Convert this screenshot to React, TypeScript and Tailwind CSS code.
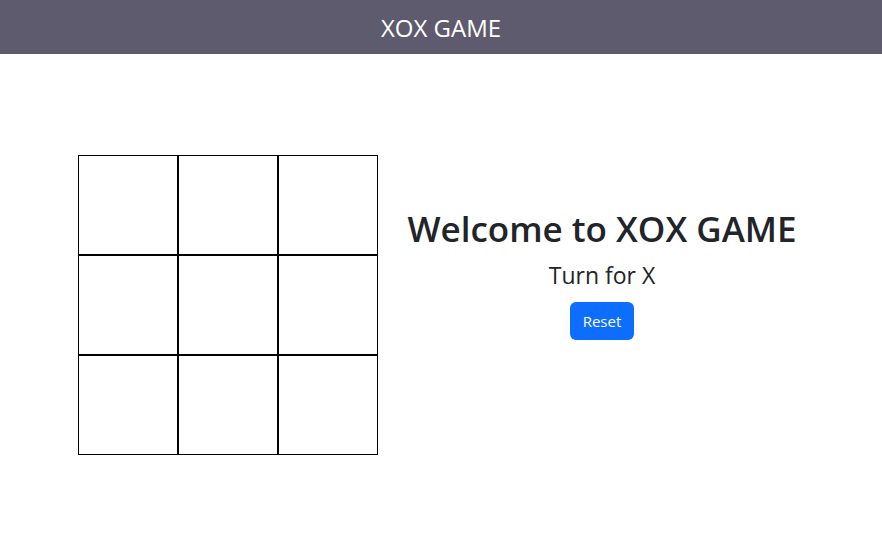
import { useState } from "react";

export default function App() {
    const [cells, setCells] = useState<(string | null)[]>(Array(9).fill(null));
    const [turn, setTurn] = useState<"X" | "O">("X");

    const play = (i: number) => {
        if (cells[i]) return;
        const next = [...cells];
        next[i] = turn;
        setCells(next);
        setTurn(turn === "X" ? "O" : "X");
    };

    const reset = () => {
        setCells(Array(9).fill(null));
        setTurn("X");
    };

    return (
        <div className="min-h-screen bg-white font-['Open_Sans',sans-serif] text-[#212529]">
            <header className="flex h-[54px] items-center justify-center bg-[#5f5b6e] pt-[2px]">
                <h1 className="text-[24px] font-normal text-white">XOX GAME</h1>
            </header>

            <main className="flex pl-[78px]">
                <div className="mt-[101px] grid w-[300px] grid-cols-3">
                    {cells.map((c, i) => (
                        <button
                            key={i}
                            onClick={() => play(i)}
                            className="flex h-[100px] w-[100px] items-center justify-center border border-black text-5xl"
                        >
                            {c}
                        </button>
                    ))}
                </div>

                <div className="mt-[151px] flex w-[448px] flex-col items-center">
                    <h2 className="whitespace-nowrap text-[35px] leading-[48px] font-semibold">
                        Welcome to XOX GAME
                    </h2>
                    <h4 className="mt-2 text-[23px] leading-[29px]">Turn for {turn}</h4>
                    <button
                        onClick={reset}
                        className="mt-[12px] rounded-md bg-[#0d6efd] px-[13px] py-1.5 text-[15px] leading-[26px] text-white"
                    >
                        Reset
                    </button>
                </div>
            </main>
        </div>
    );
}
